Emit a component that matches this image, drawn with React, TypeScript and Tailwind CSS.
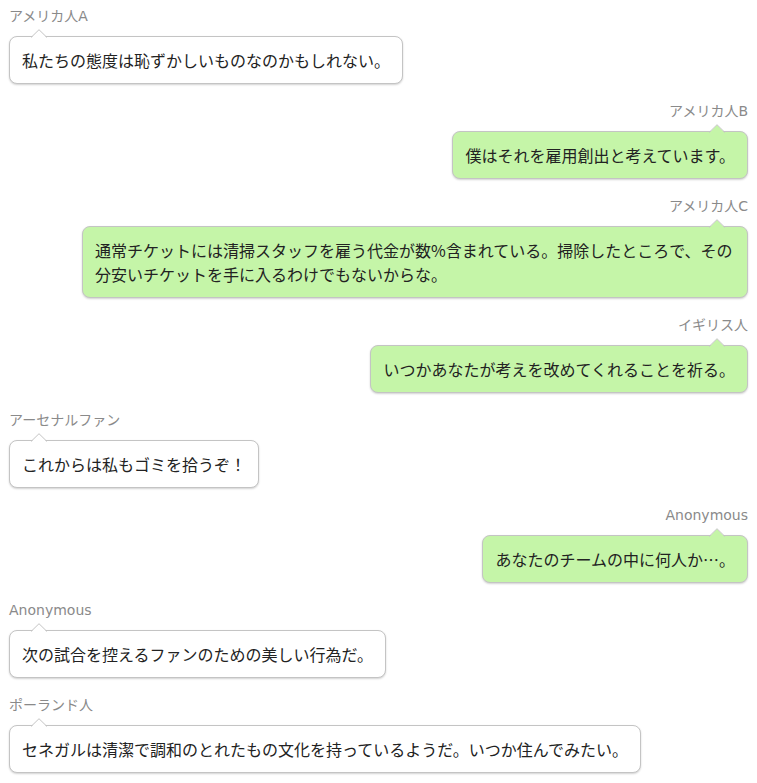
const messages = [
  { name: "アメリカ人A", text: "私たちの態度は恥ずかしいものなのかもしれない。", side: "left" },
  { name: "アメリカ人B", text: "僕はそれを雇用創出と考えています。", side: "right" },
  {
    name: "アメリカ人C",
    text: "通常チケットには清掃スタッフを雇う代金が数%含まれている。掃除したところで、その分安いチケットを手に入るわけでもないからな。",
    side: "right",
  },
  { name: "イギリス人", text: "いつかあなたが考えを改めてくれることを祈る。", side: "right" },
  { name: "アーセナルファン", text: "これからは私もゴミを拾うぞ！", side: "left" },
  { name: "Anonymous", text: "あなたのチームの中に何人か…。", side: "right" },
  { name: "Anonymous", text: "次の試合を控えるファンのための美しい行為だ。", side: "left" },
  { name: "ポーランド人", text: "セネガルは清潔で調和のとれたもの文化を持っているようだ。いつか住んでみたい。", side: "left" },
];

function Tail({ right, fill }: { right: boolean; fill: string }) {
  return (
    <svg
      width="16"
      height="9"
      viewBox="0 0 16 9"
      className={right ? "absolute -top-[8px] right-[22px]" : "absolute -top-[8px] left-[21px]"}
    >
      <polygon points="0,9 8,1 16,9" fill={fill} />
      <polyline points="0,8.5 8,0.7 16,8.5" fill="none" stroke="#c4c4c4" strokeWidth="1" />
    </svg>
  );
}

export default function App() {
  return (
    <main className="min-h-screen bg-white px-[9px] pt-[6px] font-['DejaVu_Sans','Noto_Sans_CJK_JP',sans-serif]">
      {messages.map((m, i) => {
        const right = m.side === "right";
        return (
          <div key={i} className={`mb-[17px] flex flex-col ${right ? "items-end" : "items-start"}`}>
            <div className="text-[14px] leading-[20px] text-[#8a8a8a]">{m.name}</div>
            <div
              className={`relative mt-[10px] max-w-[666px] rounded-lg border border-[#c4c4c4] px-3 py-[11px] text-[16px] leading-6 text-[#222] shadow-[0_1px_2px_rgba(0,0,0,0.18)] font-['Noto_Sans_CJK_JP',sans-serif] ${
                right ? "bg-[#c5f5a8]" : "bg-white"
              }`}
            >
              <Tail right={right} fill={right ? "#c5f5a8" : "#ffffff"} />
              {m.text}
            </div>
          </div>
        );
      })}
    </main>
  );
}
